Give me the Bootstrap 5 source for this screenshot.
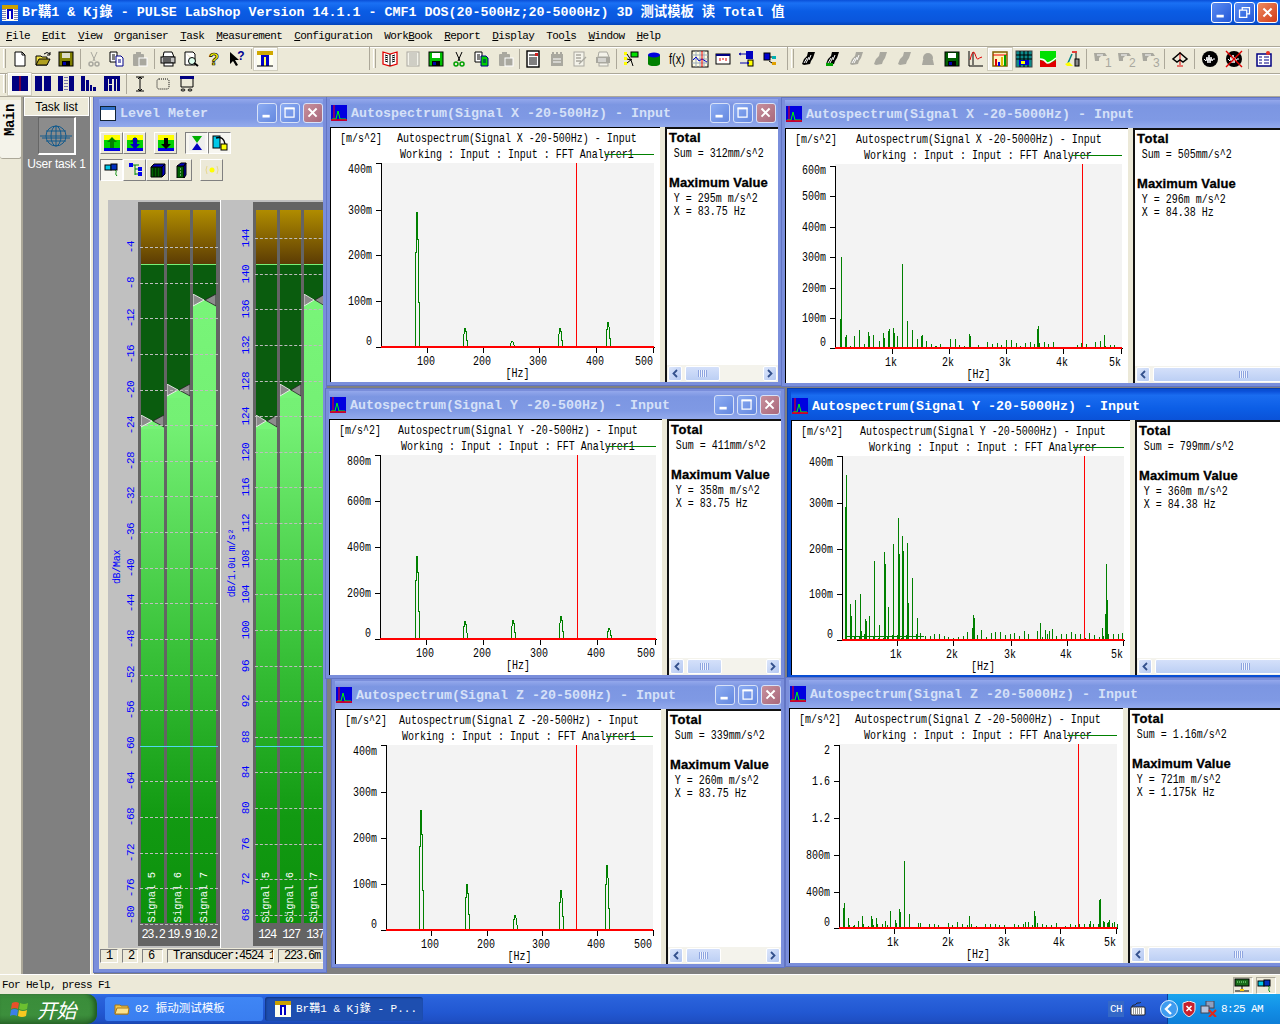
<!DOCTYPE html>
<html lang="en">
<head>
<meta charset="UTF-8">
<title>PULSE LabShop</title>
<link rel="stylesheet" href="https://cdn.jsdelivr.net/npm/bootstrap@5.3.0/dist/css/bootstrap.min.css">
<style>
html,body{margin:0;height:1024px;overflow:hidden;background:#ece9d8}
.app{width:1280px;height:1024px;font-family:"Liberation Mono","Noto Sans CJK SC",monospace;color:#000;overflow:hidden}
.apptitle{height:25px;flex:none;padding:0 2px;color:#fff;font-weight:700;font-size:13.33px;white-space:pre;background:linear-gradient(#0a4fd8,#1a70f4 12%,#0a5ce4 45%,#0a56dc 85%,#0544b8)}
.capbtn{width:21px;height:21px;border:1px solid #fff;border-radius:3px;background:linear-gradient(135deg,#5b8cf2,#2258d8);flex:none}
.capbtn.cls{background:linear-gradient(135deg,#ee8a60,#d23c18)}
.capbtn svg{display:block;width:100%;height:100%}
.capgroup{gap:2px;margin-right:0}
.menubar{height:21px;flex:none;font-size:11px;letter-spacing:-.6px;padding-top:1px}
.menubar span{padding:0 6px;width:auto}
.menubar u{text-underline-offset:1px}
.tbrow{flex:none;border-top:1px solid #aca899;box-shadow:inset 0 1px 0 #fff;padding-bottom:3px}
.tbrow1{height:27px}.tbrow2{height:23px}
.tbgroup{height:100%;padding-left:3px;flex:none}
.tbg1{width:369px}.tbg2{width:418px;border-left:1px solid #aca899}.tbg3{border-left:1px solid #aca899;width:493px}
.grip{width:3px;height:19px;margin:0 2px 0 0;border-left:1px solid #fff;border-right:1px solid #aca899;flex:none}
.tbbtn{width:23.2px;height:22px;flex:none}
.tbg3 .tbbtn{width:24px}
.tbbtn svg{width:16px;height:16px;display:block;overflow:visible}
.tbbtn.on{background:#f7f6f0;box-shadow:inset 1px 1px 0 #fff,0 0 0 1px #d0cdbd}
.tbsep{width:4.6px;height:20px;flex:none;position:relative}
.tbg3 .tbsep{width:6px}
.tbsep::after{content:"";position:absolute;left:2px;top:0;bottom:0;width:1px;background:#aca899}
.mdi{height:879px;flex:none;background:#808080;border-top:1px solid #aca899;border-bottom:1px solid #fff;overflow:hidden}
.leftbeige{width:22px;background:#ece9d8;height:100%}
.maintab{position:absolute;left:0;top:3px;width:22px;height:59px;background:#f4f3ea;border-right:1px solid #aca899;border-bottom:1px solid #aca899;border-radius:0 0 3px 3px;font-size:14px;font-weight:700}
.maintab span{writing-mode:vertical-rl;transform:rotate(180deg);display:block;margin:4px auto 0;letter-spacing:-.4px}
.taskpane{position:absolute;left:21px;top:0;width:70px;height:100%;background:#808080;border-left:2px solid #aca899;border-right:1px solid #fff}
.taskhead{margin:0 1px;height:19px;background:#ece9d8;border:1px solid #fff;font:12px "Liberation Sans",Arial,sans-serif}
.taskicon{width:38px;height:38px;margin:1px auto 0;border-right:2px solid #fff;border-bottom:2px solid #fff;background:#8c8c8c;border-top:1px solid #666;border-left:1px solid #666}
.tasklabel{color:#fff;font:12px "Liberation Sans",Arial,sans-serif;text-align:center;margin-top:2px;letter-spacing:-.2px}
.beigegap{position:absolute;left:91px;top:0;width:3px;height:100%;background:#ece9d8}
.win{position:absolute;border:3px solid #7a8edb;border-top-width:2px;background:#ece9d8;box-shadow:0 0 0 1px #6275c4}
.win.act{border-color:#0a4fd4;box-shadow:0 0 0 1px #0a3fb0}
.win.lvlwin{border-left-width:5px}
.wintitle{flex:none;color:#d5e0f8;font-weight:700;font-size:13.33px;white-space:pre;padding-left:1px;background:linear-gradient(#94a8ec,#7c96e2 20%,#7f99e4 70%,#93aaec)}
.win.act .wintitle{color:#fff;background:linear-gradient(#0a4fd8,#1a6cf0 15%,#0c5ee6 60%,#0a52d8)}
.wintitletext{padding-top:2px}
.wincap{width:20px;height:20px;border:1px solid #d8e2f8;border-radius:3px;background:linear-gradient(135deg,#8cacf2,#6488e0);flex:none}
.wincap.cls{background:linear-gradient(135deg,#c8909c,#a8687c)}
.wincap svg{display:block;width:100%;height:100%}
.capset{gap:3px}
.plotpane{background:#fff;border-top:1px solid #000;border-left:1px solid #000;flex:none;height:100%}
.plotpane svg{display:block}
.sidepane{background:#fff;border-top:2px solid #111;border-left:2px solid #111;flex:none;height:100%;margin-left:5px;overflow:hidden}
.sidehead{font:700 13px/16px "Liberation Sans",Arial,sans-serif;padding-left:2px;letter-spacing:.4px;-webkit-text-stroke:.3px #000}
.sidehead.maxhead{letter-spacing:.1px;margin-top:13px}
.sideline{font-size:12px;line-height:13.5px;padding-left:8px;white-space:pre;transform:scaleX(.833);transform-origin:0 0}
.sideline.gapline{margin-top:2px}
.chartlabel{font:12px "Liberation Mono",monospace;fill:#000}
.sbar{height:17px;background:#f4f3ec;padding:1px 1px 0 1px}
.sbtn{width:14px;height:15px;border:1px solid #fff;border-radius:2px;background:linear-gradient(135deg,#dce6fb,#b4c8f2);flex:none}
.sbtn svg{display:block}
.sthumb{height:15px;border:1px solid #fff;border-radius:2px;background:linear-gradient(#d4e0fa,#bccff4);margin-left:3px;flex:none;color:#7f97d8}
.sgrip{width:9px;height:7px;background:repeating-linear-gradient(90deg,#8ea5e0 0 1px,#eef3fe 1px 2px)}
.lvltools{height:73px;flex:none;padding:5px 0 0 1px}
.lvlrow{height:22px;margin-bottom:5px;position:relative}
.lvlbtn{width:23px;height:22px;background:#ece9d8;border:1px solid;border-color:#fff #808080 #808080 #fff;flex:none}
.lvlbtn svg{width:16px;height:16px;display:block}
.lvlbtn.on{background:#f7f6f0;border-color:#808080 #fff #fff #808080}
.lvlpanel{height:748px;background:#c0c0c0;margin-left:9px;overflow:hidden;flex:none}
.scalecol{position:relative;flex:none;height:100%}
.scalenum{position:absolute;writing-mode:vertical-rl;transform:translateY(-50%) rotate(180deg);color:#00f;font-size:11px;line-height:12px;letter-spacing:-.4px;white-space:pre}
.scalename{font-size:10px;letter-spacing:-.3px}
.meterbox{position:relative;flex:none;height:744px;margin-top:2px;background:#646464;padding:8px 0 0 3px}
.meterbars{height:713px;column-gap:3px}
.mbar{position:relative;height:713px;flex:none;background:linear-gradient(#7cf87c 0,#74f074 30%,#3cc43c 60%,#129a12 85%,#0c900c 100%);overflow:hidden}
.mbrown{height:54px;background:linear-gradient(#b08c00,#5c3c04)}
.mline{height:1px;background:#78f078}
.mdark{background:#0a5c0e}
.msig{position:absolute;left:0;right:0;bottom:0;color:#fff;font-size:10.5px;line-height:1;writing-mode:vertical-rl;transform:rotate(180deg);white-space:pre;display:flex;align-items:center;padding-top:1px}
.mvalrow{height:23px;color:#fff;font-size:12px;letter-spacing:-1.4px;margin-left:-1px}
.mval{flex:none;text-align:center}
.mdash{position:absolute;left:2px;right:2px;height:0;border-top:1px dashed #bdbdbd}
.mcyan{position:absolute;left:2px;right:2px;height:1px;background:#4fd8f0}
.mmark{position:absolute;left:0;width:100%;height:14px}
.lvlstatus{height:16px;padding:1px 0 0 1px;font-size:12px;letter-spacing:-1.2px;flex:none}
.lvlcell{height:14px;border:1px solid;border-color:#808080 #fff #fff #808080;line-height:12px;padding-left:5px;flex:none;white-space:pre;overflow:hidden}
.statusbar{height:19px;flex:none;font-size:11px;letter-spacing:-.6px;padding:1px 0 0 2px}
.statcell{width:20px;height:17px;border:1px solid;border-color:#aca899 #fff #fff #aca899;margin-left:3px}
.statcell svg{width:16px;height:15px;display:block}
.taskbar{height:30px;flex:none;background:linear-gradient(#2f6ee8,#2a63dc 10%,#2258d2 60%,#1e4fc4 90%,#1a46ae);color:#fff;font-size:12px;position:relative}
.startbtn{width:97px;height:30px;border-radius:0 10px 10px 0;background:linear-gradient(#4d9a4d,#3a8d3a 12%,#3c8f3c 70%,#2e6f2e);padding-left:10px;box-shadow:inset -3px 0 4px #1f5a1f;flex:none}
.startlabel{font:italic 20px "Noto Sans CJK SC",sans-serif;color:#fff;margin-left:7px;letter-spacing:-.5px}
.tkbtn{width:158px;height:24px;border-radius:3px;flex:none;padding-left:9px;white-space:pre;letter-spacing:-.6px;font-size:11px;background:linear-gradient(#3f86f5,#3a7ef0)}
.tkbtn.dn{background:#1e4fb0;box-shadow:inset 1px 1px 2px #123580;margin-left:2px;padding-left:10px}
.tkbtn svg{width:16px;height:16px;margin-right:5px;flex:none}
.tkcjk{font-family:"Liberation Mono","Noto Sans CJK SC",monospace;font-size:11.5px;letter-spacing:0}
.tkcjk.tksmall{font-size:11px}
.tray{position:absolute;right:0;top:0;height:30px;width:113px;background:linear-gradient(#1aa4ee,#128fe6 50%,#0e7fd8);border-left:1px solid #0b3d9a}
.trayleft{position:absolute;left:1108px;top:0;height:30px}
.trayarrow{margin-left:-8px}
.trayclock{font-size:11px;letter-spacing:-.6px;margin-left:4px}
.langchip{background:#3468c8;padding:0 2px;font-size:11px;letter-spacing:-.6px;line-height:16px}
.kbicon{margin-left:6px}
</style>
</head>
<body>
<div class="app d-flex flex-column">
  <div class="apptitle d-flex align-items-center">
    <svg width="16" height="16" viewBox="0 0 16 16" class="me-1 flex-none"><rect width="16" height="16" fill="#ffe"/><rect x="0" y="0" width="16" height="4" fill="#caa000"/><rect x="5" y="4" width="6" height="10" fill="#0000c0"/><rect x="7" y="6" width="2" height="8" fill="#fff"/><path d="M1 4v11M3 4v11M13 4v11M15 4v11" stroke="#008" stroke-dasharray="1 1"/></svg>
    <span>Br鞲1 &amp; Kj錄 - PULSE LabShop Version 14.1.1 - CMF1 DOS(20-500Hz;20-5000Hz) 3D 测试模板 读 Total 值</span>
    <div class="ms-auto d-flex capgroup">
      <div class="capbtn"><svg viewBox="0 0 21 21"><rect x="5" y="13" width="8" height="3" fill="#fff"/></svg></div>
      <div class="capbtn"><svg viewBox="0 0 21 21"><path d="M8 8V5h8v7h-3M5 8h8v8H5z" fill="none" stroke="#fff" stroke-width="1.4"/></svg></div>
      <div class="capbtn cls"><svg viewBox="0 0 21 21"><path d="M6 6l9 9M15 6l-9 9" stroke="#fff" stroke-width="2.2"/></svg></div>
    </div>
  </div>
  <div class="menubar d-flex align-items-center">
    <span><u>F</u>ile</span><span><u>E</u>dit</span><span><u>V</u>iew</span><span><u>O</u>rganiser</span><span><u>T</u>ask</span><span><u>M</u>easurement</span><span><u>C</u>onfiguration</span><span>Work<u>B</u>ook</span><span><u>R</u>eport</span><span><u>D</u>isplay</span><span>Too<u>l</u>s</span><span><u>W</u>indow</span><span><u>H</u>elp</span>
  </div>
  <div class="tbrow tbrow1 d-flex align-items-center" id="tb1"></div>
  <div class="tbrow tbrow2 d-flex align-items-center" id="tb2"></div>
  <div class="mdi position-relative" id="mdi">
    <div class="leftbeige"></div>
    <div class="maintab"><span>Main</span></div>
    <div class="taskpane">
      <div class="taskhead d-flex align-items-center justify-content-center">Task list</div>
      <div class="taskicon d-flex align-items-center justify-content-center">
        <svg width="34" height="24" viewBox="0 0 34 24" fill="none" stroke="#125a8c"><circle cx="17" cy="12" r="10"/><ellipse cx="17" cy="12" rx="5" ry="10"/><path d="M7 7h20M7 17h20M1 12h32M3 14h28M17 2v20" /></svg>
      </div>
      <div class="tasklabel">User task 1</div>
    </div>
    <div class="beigegap"></div>
  </div>
  <div class="statusbar d-flex align-items-center">
    <span>For Help, press F1</span>
    <div class="ms-auto d-flex me-1">
      <div class="statcell"><svg viewBox="0 0 16 15"><rect x="1" y="1" width="14" height="7" fill="#1a6a1a" stroke="#000"/><path d="M3 4h10" stroke="#9f9" stroke-dasharray="1 1"/><path d="M8 8v4M1 13h14" stroke="#000"/><rect x="6" y="11" width="4" height="2" fill="#fc0"/></svg></div>
      <div class="statcell"><svg viewBox="0 0 16 15"><rect x="1" y="3" width="6" height="5" fill="#00c8e8" stroke="#000"/><rect x="7" y="2" width="6" height="6" fill="#0030c0" stroke="#000"/><path d="M11 8c3 2-1 3 2 6" fill="none" stroke="#080"/></svg></div>
    </div>
  </div>
  <div class="taskbar d-flex align-items-center">
    <div class="startbtn d-flex align-items-center">
      <svg width="20" height="18" viewBox="0 0 20 18"><path d="M2 3q4-2 7 0l-1 6q-3-2-7 0z" fill="#e8502a"/><path d="M10 3q4 2 8 0l-1 6q-4 2-8 0z" fill="#6cc030"/><path d="M1 10q3-2 7 0l-1 6q-4-2-7 0z" fill="#3c7fe8"/><path d="M9 10q4 2 8 0l-1 6q-4 2-8 0z" fill="#f8c820"/></svg>
      <span class="startlabel">开始</span>
    </div>
    <div class="tkbtn d-flex align-items-center ms-2">
      <svg viewBox="0 0 16 16"><path d="M1 13V4h5l1 1h7v8z" fill="#f4c84c" stroke="#a87818"/><path d="M1 13l2-6h12l-1 6z" fill="#fce28c" stroke="#a87818"/></svg>
      <span class="tkcjk">02 振动测试模板</span>
    </div>
    <div class="tkbtn dn d-flex align-items-center">
      <svg viewBox="0 0 16 16"><rect width="16" height="16" fill="#ffe"/><rect width="16" height="4" fill="#caa000"/><rect x="5" y="4" width="6" height="10" fill="#0000c0"/><rect x="7" y="6" width="2" height="8" fill="#fff"/></svg>
      <span class="tkcjk tksmall">Br鞲1 &amp; Kj錄 - P...</span>
    </div>
    <div class="trayleft d-flex align-items-center">
      <span class="langchip">CH</span>
      <svg class="kbicon" width="16" height="14" viewBox="0 0 16 14"><rect x="1" y="5" width="14" height="8" rx="1" fill="#fff" stroke="#222"/><path d="M3 7h10M3 9h10M3 11h10" stroke="#333" stroke-dasharray="1 1"/><path d="M2 5c0-3 3-1 4-3s3 0 5-2" fill="none" stroke="#222"/></svg>
    </div>
    <div class="tray d-flex align-items-center">
      <svg class="trayarrow" width="18" height="18" viewBox="0 0 18 18"><circle cx="9" cy="9" r="8.5" fill="#3f9cf0" stroke="#dcefff"/><path d="M11 4l-5 5 5 5" fill="none" stroke="#fff" stroke-width="2.4"/></svg>
      <svg class="ms-1" width="14" height="16" viewBox="0 0 14 16"><path d="M7 0l6 2v6c0 4-3 6-6 8-3-2-6-4-6-8V2z" fill="#c8202c" stroke="#eee"/><path d="M4.500 5l5 5M9.500 5l-5 5" stroke="#fff" stroke-width="1.6"/></svg>
      <svg class="ms-1" width="17" height="16" viewBox="0 0 17 16"><rect x="6" y="0" width="8" height="7" fill="#8fa0c0" stroke="#445"/><rect x="1" y="5" width="8" height="7" fill="#b8c4dc" stroke="#445"/><path d="M9 9l7 7M16 9l-7 7" stroke="#e02818" stroke-width="2"/></svg>
      <span class="trayclock">8:25 AM</span>
    </div>
  </div>
</div>
<script>
// toolbar icons, 16x16
const G = '#a9a89f';
const hand = (c, f) => `<path d="M8 1h7l-2 6-2 3-1 3-6 1-2-1 2-5 3-3z" fill="${c}"/><path d="M7 7l-3 5M9 6l-3 6M11 4l-2 5" stroke="#fff"/>` + (f ? `<rect x="2" y="12" width="7" height="3" fill="${f}"/>` : '');
const ghost = `<path d="M8 1h7l-2 6-2 3-1 3-6 1-2-1 2-5 3-3z" fill="${G}"/>`;
const floppy = (c, d) => `<rect x="1" y="1" width="14" height="14" fill="${c}" stroke="#000"/><rect x="4" y="2" width="8" height="5" fill="${d}"/><rect x="4" y="10" width="8" height="5" fill="#000"/><rect x="5" y="11" width="3" height="3" fill="#00a"/>`;
const scis = c => `<path d="M5 1l4 9M11 1L7 10" stroke="#000" fill="none"/><circle cx="5" cy="13" r="2" fill="none" stroke="${c}" stroke-width="1.500"/><circle cx="11" cy="13" r="2" fill="none" stroke="${c}" stroke-width="1.500"/>`;
const copy2 = c => `<path d="M1 1h7v10H1z" fill="#fff" stroke="#000"/><path d="M3 4h3M3 6h3M3 8h3" stroke="#000"/><path d="M7 5h5l2 2v8H7z" fill="${c}" stroke="#008"/><path d="M9 9h3M9 11h3" stroke="#008"/>`;
const paste = `<rect x="1" y="3" width="11" height="12" rx="1" fill="${G}"/><rect x="4" y="1" width="5" height="3" fill="${G}"/><rect x="7" y="7" width="8" height="8" fill="${G}" stroke="#fff"/>`;
const gun = n => `<path d="M0 2h11l2 3H7L5 7v3H1z" fill="${G}"/><path d="M3 4h6" stroke="#fff"/><text x="11" y="16" font-size="12" font-family="Liberation Sans" fill="${G}">${n}</text>`;
const ic = {
  newf:`<path d="M3 1h7l3 3v11H3z" fill="#fff" stroke="#000"/><path d="M10 1v3h3" fill="none" stroke="#000"/>`,
  open:`<path d="M1 14V5h5l1 1h5v8z" fill="#f0e040" stroke="#000"/><path d="M1 14l3-6h11l-3 6z" fill="#b0a020" stroke="#000"/><path d="M9 3q3-3 6 0m0-2v3h-3" fill="none" stroke="#000"/>`,
  save:floppy('#808000','#dcdcc8'),
  cut:`<path d="M5 1l4 9M11 1L7 10" stroke="${G}"/><circle cx="5" cy="13" r="2" fill="none" stroke="${G}" stroke-width="1.500"/><circle cx="11" cy="13" r="2" fill="none" stroke="${G}" stroke-width="1.500"/>`,
  copy:copy2('#fff'), paste,
  print:`<path d="M4 1h8l2 5H3z" fill="#fff" stroke="#000"/><rect x="1" y="6" width="14" height="6" fill="#c0c0c0" stroke="#000"/><path d="M3 8h8M3 10h8" stroke="#000"/><rect x="4" y="12" width="9" height="3" fill="#fff" stroke="#000"/>`,
  prev:`<path d="M2 1h8l2 2v6M12 14H2V1" fill="#fff" stroke="#000"/><circle cx="9" cy="10" r="3.500" fill="#dfe" stroke="#000"/><path d="M11 12l4 3" stroke="#000" stroke-width="2"/>`,
  help:`<text x="8" y="14" text-anchor="middle" font-size="17" font-weight="700" font-family="Liberation Sans" fill="#ff0" stroke="#000" stroke-width=".7">?</text>`,
  what:`<path d="M1 1v12l3-3 3 5 2-1-3-5h4z" fill="#000"/><text x="12" y="9" text-anchor="middle" font-size="12" font-weight="700" font-family="Liberation Sans" fill="#000090">?</text>`,
  pulse:`<rect x="0" y="1" width="16" height="14" fill="#fffff0"/><rect y="0" width="16" height="4" fill="#d0a800"/><rect x="4" y="4" width="8" height="11" fill="#0000c8"/><rect x="7" y="6" width="2" height="9" fill="#ffff60"/><path d="M0 15h16" stroke="#000"/>`,
  book:`<path d="M1 1l7 2 7-2v12l-7 2-7-2z" fill="#fff" stroke="#e00000" stroke-width="1.300"/><path d="M8 3v12M3 4l3 1M3 6l3 1M3 8l3 1M3 10l3 1M10 5l3-1M10 7l3-1M10 9l3-1M10 11l3-1" stroke="#000"/>`,
  lines:`<rect x="2" y="1" width="12" height="14" fill="#f4f3ea" stroke="${G}"/><path d="M4 3h8M4 5h8M4 7h8M4 9h8M4 11h8M4 13h8" stroke="${G}"/>`,
  saveg:floppy('#00c000','#fff'),
  cutg:scis('#00a000'), copyg:copy2('#00d000'),
  rep:`<rect x="2" y="0" width="12" height="16" fill="#fff" stroke="#000" stroke-width="1.400"/><path d="M4 4h6M4 7h8M4 9h8M4 11h8M4 13h8" stroke="#000"/><rect x="10" y="2" width="3" height="3" fill="#d02020"/>`,
  grep:`<rect x="2" y="3" width="12" height="12" fill="${G}"/><path d="M4 1v5M8 1v5M12 1v5" stroke="${G}" stroke-width="2"/><path d="M4 8h8M4 11h8" stroke="#fff"/>`,
  gedit:`<rect x="2" y="1" width="10" height="14" fill="#f4f3ea" stroke="${G}"/><path d="M4 4h5M4 7h5M4 10h5M7 13l7-7" stroke="${G}" stroke-width="1.300"/>`,
  gprint:`<path d="M4 1h8l2 5H3z" fill="#f4f3ea" stroke="${G}"/><rect x="1" y="6" width="14" height="6" fill="${G}"/><path d="M3 8h8M3 10h8" stroke="#fff"/><rect x="4" y="12" width="9" height="3" fill="#f4f3ea" stroke="${G}"/>`,
  tree:`<rect x="1" y="1" width="3" height="3" fill="#ff0"/><rect x="1" y="6" width="3" height="3" fill="#ff0"/><rect x="1" y="11" width="3" height="3" fill="#ff0"/><rect x="8" y="1" width="7" height="5" fill="#00e000" stroke="#000"/><path d="M4 3l4 6 2 6M4 8l4 1M4 12l5-4" stroke="#000" fill="none"/>`,
  can:`<rect x="2" y="4" width="12" height="9" fill="#008000"/><ellipse cx="8" cy="13" rx="6" ry="2" fill="#008000"/><ellipse cx="8" cy="4" rx="6" ry="2.500" fill="#0000e0"/>`,
  fx:`<text x="0" y="13" font-size="14" font-family="Liberation Sans" fill="#000" textLength="16" lengthAdjust="spacingAndGlyphs">f(x)</text>`,
  scope:`<rect x="0" y="0" width="16" height="16" fill="#fffbe0" stroke="#000"/><path d="M4 0v16M8 0v16M12 0v16M0 4h16M0 8h16M0 12h16" stroke="#9ab"/><path d="M1 9l3-3 3 4 3-2 5 3" fill="none" stroke="#00c" /><path d="M10 0v16" stroke="#e00"/>`,
  proc:`<rect x="1" y="3" width="14" height="10" fill="#fff" stroke="#000"/><rect x="1" y="3" width="14" height="2" fill="#000080"/><path d="M5 7v3M11 7v3M7 8h2" stroke="#e00000"/>`,
  flow:`<rect x="7" y="0" width="7" height="8" fill="#0000c0"/><rect x="9" y="9" width="5" height="6" fill="#ff0" stroke="#000"/><path d="M1 3h6M2 2L0 3l2 1M1 12h8M8 11l2 1-2 1" stroke="#00a" fill="none"/>`,
  block:`<rect x="2" y="2" width="6" height="7" fill="#0000d0" stroke="#000"/><rect x="10" y="5" width="4" height="3" fill="#00b0b0"/><rect x="10" y="11" width="4" height="3" fill="#e0a000"/><path d="M8 6h2M7 10l3 2" stroke="#000"/>`,
  h1:hand('#000'), h2:hand('#000','#00a000'), gh1:hand(G), gh2:ghost, gh3:ghost, gh4:`<circle cx="8" cy="7" r="5" fill="${G}"/><path d="M3 9h10l1 5H2z" fill="${G}"/>`,
  saved:floppy('#006000','#fff'),
  graph:`<path d="M1 0v15h14M1 15" stroke="#000" fill="none"/><path d="M5 1v13" stroke="#000"/><path d="M2 9q3-12 5-6t3 5 4-2" fill="none" stroke="#e00000"/>`,
  chart:`<rect x="1" y="1" width="14" height="14" fill="#fff4c0" stroke="#806000" stroke-width="1.500"/><rect x="3" y="8" width="2" height="7" fill="#e00000"/><rect x="6" y="11" width="2" height="4" fill="#0000e0"/><rect x="9" y="6" width="2" height="9" fill="#e0c000"/><path d="M1 4h14" stroke="#e00"/><rect x="12" y="4" width="2" height="11" fill="#00a000"/>`,
  grid:`<rect x="0" y="0" width="16" height="16" fill="#0a8a8a" stroke="#444"/><path d="M4 0v16M8 0v16M12 0v16M0 4h16M0 8h16" stroke="#000"/><rect x="3" y="9" width="10" height="5" fill="#0000d0"/><rect x="5" y="10" width="4" height="3" fill="#ff0"/>`,
  curve:`<rect x="0" y="0" width="16" height="16" fill="#00e000"/><path d="M0 9l5 1 3 3 8-4v7H0z" fill="#e00000"/><path d="M0 8q4 0 6 3t10-4" fill="none" stroke="#fff" stroke-width="1.500"/>`,
  pen:`<path d="M12 2v6" stroke="#000"/><path d="M8 1h5" stroke="#e00000" stroke-width="1.500"/><rect x="11" y="8" width="4" height="7" fill="#888" stroke="#000"/><path d="M8 3l-4 9" stroke="#008080" stroke-width="1.500"/><path d="M1 13l4-2 4 4H3z" fill="#ff0"/>`,
  g1:gun(1), g2:gun(2), g3:gun(3),
  scale:`<path d="M8 1v13M5 15h6" stroke="#e00000"/><path d="M8 2L1 8l4 3 3-2 3 2 4-3z" fill="none" stroke="#000" stroke-width="1.500"/>`,
  wave:`<circle cx="8" cy="8" r="8" fill="#000"/><path d="M2 8l2 2 1-4 1 6 1-8 1 8 1-6 1 4 1-2h2" fill="none" stroke="#fff"/>`,
  waveoff:`<circle cx="8" cy="8" r="8" fill="#000"/><path d="M2 8l2 2 1-4 1 6 1-8 1 8 1-6 1 4 1-2h2" fill="none" stroke="#fff"/><path d="M0 0l16 16M16 0L0 16" stroke="#e00000" stroke-width="1.400"/>`,
  note:`<rect x="1" y="3" width="14" height="12" fill="#fff" stroke="#000080" stroke-width="1.500"/><path d="M3 6h3M8 6h5M3 9h3M8 9h5M3 12h3M8 12h5" stroke="#000080"/><circle cx="12" cy="2" r="2" fill="#e83020"/>`,
  one:`<rect x="0" y="0" width="16" height="15" fill="#000080"/><path d="M8 0v15" stroke="#e00000"/>`,
  two:`<rect x="0" y="0" width="7" height="15" fill="#000080"/><rect x="9" y="0" width="7" height="15" fill="#000080"/>`,
  three:`<rect x="0" y="0" width="5" height="15" fill="#000080"/><rect x="11" y="0" width="5" height="15" fill="#000080"/><path d="M7 1v13M9 1v13" stroke="#000080" stroke-dasharray="1 2"/>`,
  four:`<path d="M0 0h4v15H0zM5 4h3v11H5zM9 9h2v6H9zM12 11h3v4h-3z" fill="#000080"/>`,
  five:`<path d="M0 0h4v15H0zM5 0h3v8H5zM5 9h3v6H5zM10 0h2v15h-2zM13 0h3v15h-3zM0 0h16v3H0z" fill="#000080"/>`,
  cursor:`<path d="M4 1h8M8 1v14M4 15h8M6 3l2-2 2 2M6 13l2 2 2-2" stroke="#000" fill="none"/>`,
  dots:`<rect x="2" y="3" width="12" height="10" rx="2" fill="none" stroke="#000" stroke-dasharray="1 1"/>`,
  bars:`<rect x="1" y="0" width="14" height="3" fill="#000080"/><path d="M2 3v8h12V3" fill="none" stroke="#000"/><ellipse cx="4" cy="14" rx="2" ry="1" fill="none" stroke="#000"/><ellipse cx="11" cy="14" rx="2" ry="1" fill="none" stroke="#000"/>`
};
const btn = (n, on) => `<div class="tbbtn ${on ? 'on' : ''} d-flex align-items-center justify-content-center"><svg viewBox="0 0 16 16">${ic[n]}</svg></div>`;
const sep = '<div class="tbsep"></div>';
const grip = '<div class="grip"></div>';
const group = (cls, items) => `<div class="tbgroup ${cls} d-flex align-items-center">${grip}${items}</div>`;
const row = a => a.map(n => n === '|' ? sep : n[0] === '*' ? btn(n.slice(1), true) : btn(n)).join('');
document.getElementById('tb1').innerHTML =
  group('tbg1', row(['newf','open','save','|','cut','copy','paste','|','print','prev','help','what','|','*pulse'])) +
  group('tbg2', row(['book','lines','saveg','cutg','copyg','paste','|','rep','grep','gedit','gprint','|','tree','can','fx','scope','proc','flow','block'])) +
  group('tbg3', row(['h1','h2','gh1','gh2','gh3','gh4','saved','graph','*chart','grid','curve','pen','|','g1','g2','g3','|','scale','|','wave','waveoff','|','note']));
document.getElementById('tb2').innerHTML =
  group('', row(['*one','two','three','four','five','|','cursor','dots','bars']));

// seeded noise so the small spectrum bars stay the same between runs
let seed = 17;
const rnd = () => (seed = (seed * 16807) % 2147483647) / 2147483647;

function peakPath(rel, h, ax, bot) {
  const x = ax + rel + .5;
  const pts = [[-3,0],[-2,1],[-1.5,h*.7],[-1,h*.7],[-.5,h],[0,h],[.5,h*.8],[1,h*.8],[1.5,h*.33],[2,h*.33],[2,1],[3,0]];
  return 'M' + pts.map(p => (x + p[0]).toFixed(1) + ' ' + (bot - p[1]).toFixed(1)).join('L');
}
function barsPath(bars, ax, bot) {
  return bars.map(b => `M${Math.round(ax + b[0]) + .5} ${bot}v${-b[1]}`).join('');
}
function noise(width, from, amp) {
  const out = [];
  for (let r = from; r < width; r += 4.7) {
    if (rnd() < .85) out.push([r, 2 + rnd() * amp * (rnd() < .15 ? 2 : 1)]);
  }
  return out;
}

const wins = [
  {cl:330, ct:127, pr:660, sl:665, sr:778, cb:382, tt:99, title:'Autospectrum(Signal X -20-500Hz) - Input', capR:2,
   sum:'312mm/s^2', my:'295m m/s^2', mx:'83.75 Hz',
   ax:381, right:654, top:163, bot:347, cur:576, mxl:340, txl:397, wxl:400, lg:605, h1:138, h2:154, wt:'FFT Analyrer1',
   yt:[['400m',163],['300m',210],['200m',255],['100m',301],['0',347]], xt:[['100',427],['200',483],['300',539],['400',596],['500',653]],
   peaks:[[36,135],[84,19],[131,6],[179,19],[227,25]]},
  {cl:785, ct:128, pr:1128, sl:1133, sr:1300, cb:383, tt:100, title:'Autospectrum(Signal X -20-5000Hz) - Input', noCaps:true,
   sum:'505mm/s^2', my:'296m m/s^2', mx:'84.38 Hz',
   ax:835, right:1122, top:164, bot:348, cur:1082, mxl:795, txl:856, wxl:864, lg:1072, h1:139, h2:155, wt:'FFT Analyrer',
   yt:[['600m',166],['500m',196],['400m',227],['300m',257],['200m',288],['100m',318],['0',348]], xt:[['1k',892],['2k',949],['3k',1006],['4k',1063],['5k',1121]],
   bars:[[5,29],[6,91],[10,11],[11,13],[15,2],[19,12],[24,18],[29,4],[33,16],[34,12],[38,13],[44,7],[48,15],[49,10],[53,17],[54,19],[58,20],[59,15],[62,12],[67,84],[72,27],[77,18],[82,9],[86,12],[87,13],[91,7],[96,4],[134,14],[135,12],[202,19],[203,22],[269,13],[265,7],[260,6],[100,2]], noiseFrom:96, amp:4},
  {cl:329, ct:419, pr:662, sl:667, sr:781, cb:675, tt:391, title:'Autospectrum(Signal Y -20-500Hz) - Input', capR:1,
   sum:'411mm/s^2', my:'358m m/s^2', mx:'83.75 Hz',
   ax:380, right:656, top:455, bot:639, cur:577, mxl:339, txl:398, wxl:401, lg:607, h1:430, h2:446, wt:'FFT Analyrer1',
   yt:[['800m',455],['600m',501],['400m',547],['200m',593],['0',639]], xt:[['100',426],['200',483],['300',540],['400',597],['500',655]],
   peaks:[[37,83],[85,18],[133,19],[181,23],[229,11]]},
  {cl:791, ct:420, pr:1130, sl:1135, sr:1300, cb:675, tt:391, title:'Autospectrum(Signal Y -20-5000Hz) - Input', act:true, noCaps:true,
   sum:'799mm/s^2', my:'360m m/s^2', mx:'84.38 Hz', hump:82,
   ax:842, right:1124, top:456, bot:640, cur:1084, mxl:801, txl:860, wxl:869, lg:1073, h1:431, h2:447, wt:'FFT Analyrer',
   yt:[['400m',456],['300m',503],['200m',549],['100m',594],['0',640]], xt:[['1k',897],['2k',953],['3k',1011],['4k',1067],['5k',1123]],
   bars:[[3,133],[4,165],[8,36],[9,24],[13,40],[18,46],[19,9],[23,21],[24,19],[27,24],[32,79],[37,15],[42,88],[43,76],[46,33],[51,96],[56,122],[57,86],[60,104],[61,89],[65,97],[66,37],[70,62],[75,22],[131,25],[132,22],[195,9],[198,17],[203,10],[207,9],[260,12],[263,26],[264,76],[265,40]], noiseFrom:3, amp:6},
  {cl:335, ct:709, pr:661, sl:666, sr:781, cb:964, tt:681, title:'Autospectrum(Signal Z -20-500Hz) - Input', capR:0,
   sum:'339mm/s^2', my:'260m m/s^2', mx:'83.75 Hz',
   ax:386, right:653, top:745, bot:930, cur:576, mxl:345, txl:399, wxl:402, lg:606, h1:720, h2:736, wt:'FFT Analyrer1',
   yt:[['400m',745],['300m',792],['200m',838],['100m',884],['0',930]], xt:[['100',431],['200',487],['300',542],['400',597],['500',653]],
   peaks:[[35,120],[81,46],[129,15],[175,40],[221,65]]},
  {cl:789, ct:708, pr:1123, sl:1128, sr:1300, cb:963, tt:680, title:'Autospectrum(Signal Z -20-5000Hz) - Input', noCaps:true,
   sum:'1.16m/s^2', my:'721m m/s^2', mx:'1.175k Hz',
   ax:839, right:1117, top:744, bot:928, cur:1078, mxl:799, txl:855, wxl:864, lg:1067, h1:719, h2:735, wt:'FFT Analyrer',
   yt:[['2',745],['1.6',781],['1.2',818],['800m',855],['400m',892],['0',928]], xt:[['1k',894],['2k',949],['3k',1005],['4k',1060],['5k',1116]],
   bars:[[4,20],[5,25],[9,10],[14,2],[19,7],[23,12],[32,12],[33,9],[37,10],[46,7],[51,17],[56,8],[60,19],[61,16],[65,67],[70,14],[79,5],[130,12],[186,6],[195,17],[196,12],[251,7],[260,28],[261,29],[265,6],[269,6],[270,8],[275,6]], noiseFrom:10, amp:3}
];

const label = (x, y, s, anchor) => {
  const w = s.length * 6;
  const xs = anchor === 'end' ? x - w : anchor === 'mid' ? x - w / 2 : x;
  return `<text class="chartlabel" transform="translate(${xs} ${y + 4}) scale(.8333 1)" xml:space="preserve">${s}</text>`;
};

function chartSvg(w) {
  const W = w.pr - w.cl - 1, H = w.cb - w.ct - 1;
  let s = `<svg width="${W}" height="${H}" viewBox="${w.cl + 1} ${w.ct + 1} ${W} ${H}">`;
  s += `<rect x="${w.ax}" y="${w.top}" width="${w.right - w.ax}" height="${w.bot - w.top}" fill="#f3f3f3"/>`;
  s += label(w.mxl, w.h1, '[m/s^2]');
  s += label(w.txl, w.h1, w.title);
  s += label(w.wxl, w.h2, 'Working : Input : Input : ' + w.wt);
  s += `<path d="M${w.lg} ${w.h2 + .5}H${w.right}" stroke="#008000" shape-rendering="crispEdges"/>`;
  // spectrum
  if (w.peaks) {
    s += `<path d="${w.peaks.map(p => peakPath(p[0], p[1], w.ax, w.bot)).join('')}" fill="none" stroke="#008000" shape-rendering="crispEdges"/>`;
  } else {
    const all = w.bars.concat(noise(w.right - w.ax, w.noiseFrom, w.amp));
    s += `<path d="${barsPath(all, w.ax, w.bot)}" stroke="#008000" shape-rendering="crispEdges"/>`;
    if (w.hump) s += `<path d="M${w.ax + 3} ${w.bot - 3.5}H${w.ax + w.hump}" stroke="#008000" stroke-width="1" shape-rendering="crispEdges"/>`;
  }
  // axes
  s += `<path d="M${w.ax + .5} ${w.yt[0][1]}V${w.bot}M${w.ax - 1} ${w.bot + .5}H${w.right + 1}" stroke="#000" shape-rendering="crispEdges"/>`;
  w.yt.forEach(t => {
    const y = Math.round(t[1]) + .5;
    s += `<path d="M${w.ax - 5} ${y}H${w.ax}" stroke="#000" shape-rendering="crispEdges"/>`;
    s += label(w.ax - 9, Math.min(Math.max(t[1], w.top + 6), w.bot - 6), t[0], 'end');
  });
  w.xt.forEach(t => {
    s += `<path d="M${t[1] + .5} ${w.bot}v6" stroke="#000" shape-rendering="crispEdges"/>`;
    const half = t[0].length * 3;
    s += label(Math.min(t[1] - 1, w.right - 1 - half), w.bot + 14, t[0], 'mid');
  });
  s += label((w.ax + w.right) / 2, w.bot + 26, '[Hz]', 'mid');
  s += `<rect x="${w.ax}" y="${w.bot - 1}" width="${w.right - w.ax}" height="2" fill="#f00"/>`;
  s += `<path d="M${w.cur + .5} ${w.top}V${w.bot}" stroke="#f00" shape-rendering="crispEdges"/>`;
  return s + '</svg>';
}

const chartIcon = '<svg width="16" height="16" viewBox="0 0 16 16" class="flex-none me-1"><rect width="16" height="16" fill="#0000e0"/><path d="M3 15V0" stroke="#f00"/><path d="M1 14h4l2-8 1 4 1 4h6" stroke="#0f0" fill="none"/><path d="M0 15h16" stroke="#f00" stroke-width="1.500"/></svg>';
const capBtns = `<div class="ms-auto d-flex capset flex-none">
  <div class="wincap"><svg viewBox="0 0 20 20"><rect x="5" y="12" width="8" height="3" fill="#fff"/></svg></div>
  <div class="wincap"><svg viewBox="0 0 20 20"><path d="M4.500 4.500h10v10h-10z" fill="none" stroke="#fff" stroke-width="1.400"/><path d="M4 5h11" stroke="#fff" stroke-width="2"/></svg></div>
  <div class="wincap cls"><svg viewBox="0 0 20 20"><path d="M5 5l9 9M14 5l-9 9" stroke="#fff" stroke-width="2.200"/></svg></div>
</div>`;

function scrollbar(w) {
  const wide = w.sr > 1280;
  const thumb = wide
    ? '<div class="sthumb d-flex align-items-center" style="width:300px;padding-left:85px"><div class="sgrip"></div></div>'
    : '<div class="sthumb d-flex align-items-center justify-content-center" style="width:35px"><div class="sgrip"></div></div>';
  const right = wide ? '' : '<div class="sbtn ms-auto"><svg width="12" height="13" viewBox="0 0 12 13"><path d="M4 3l3.500 3.500L4 10" fill="none" stroke="#33508c" stroke-width="1.800"/></svg></div>';
  return `<div class="sbar d-flex mt-auto"><div class="sbtn"><svg width="12" height="13" viewBox="0 0 12 13"><path d="M8 3L4.500 6.500 8 10" fill="none" stroke="#33508c" stroke-width="1.800"/></svg></div>${thumb}${right}</div>`;
}

const mdi = document.getElementById('mdi');
const MDI_TOP = 97;

wins.forEach(w => {
  const el = document.createElement('div');
  el.className = 'win d-flex flex-column' + (w.act ? ' act' : '');
  el.style.cssText = `left:${w.cl - 3}px;top:${w.tt - 2 - MDI_TOP}px;width:${w.sr - w.cl + 6}px;height:${w.cb - w.tt + 5}px`;
  el.innerHTML = `
    <div class="wintitle d-flex align-items-center" style="height:${w.ct - w.tt}px;padding-right:${w.capR || 0}px">
      ${chartIcon}<span class="wintitletext">${w.title}</span>${w.noCaps ? '' : capBtns}
    </div>
    <div class="d-flex flex-grow-1" style="min-height:0">
      <div class="plotpane" style="width:${w.pr - w.cl}px">${chartSvg(w)}</div>
      <div class="sidepane d-flex flex-column" style="width:${w.sr - w.sl}px">
        <div class="sidehead" style="margin-top:1px">Total</div>
        <div class="sideline gapline">Sum = ${w.sum}</div>
        <div class="sidehead maxhead">Maximum Value</div>
        <div class="sideline gapline">Y = ${w.my}</div>
        <div class="sideline">X = ${w.mx}</div>
        ${scrollbar(w)}
      </div>
    </div>`;
  mdi.appendChild(el);
});

// level meter window
const lvlIcon = arrow => `<svg viewBox="0 0 16 16"><rect width="16" height="5" fill="#ff0"/><rect y="5" width="16" height="8" fill="#00d000"/><rect y="13" width="16" height="3" fill="#0000e0"/>${arrow}</svg>`;
const up = c => `<path d="M8 2l5 5h-3v6H6V7H3z" fill="${c}"/>`;
const down = c => `<path d="M8 14l5-5h-3V3H6v6H3z" fill="${c}"/>`;
const lvlBtns1 = [
  [lvlIcon(up('#008000')), ''], [lvlIcon(up('#008000') + down('#0000c0')), ''], [lvlIcon(down('#000')), 'ms8'],
  [`<svg viewBox="0 0 16 16"><rect width="16" height="16" fill="#eee"/><path d="M8 8L3 1h10z" fill="#00b000"/><path d="M8 8l-5 7h10z" fill="#0000c0"/></svg>`, 'on ms8'],
  [`<svg viewBox="0 0 16 16"><rect x="1" y="1" width="7" height="12" fill="#00c8e8" stroke="#000"/><rect x="9" y="9" width="6" height="6" fill="#ff0" stroke="#000"/><path d="M4 3q8-2 9 6" fill="none" stroke="#000" stroke-width="1.500"/></svg>`, 'on']
];
const lvlBtns2 = [
  [`<svg viewBox="0 0 16 16"><rect x="1" y="3" width="6" height="5" fill="#00c8e8" stroke="#000"/><rect x="7" y="2" width="6" height="6" fill="#0030c0" stroke="#000"/><path d="M11 8c3 2-1 3 2 6" fill="none" stroke="#080"/></svg>`, 'on'],
  [`<svg viewBox="0 0 16 16"><path d="M4 3h8M8 3v10M8 7h4M8 12h4" stroke="#080"/><rect x="2" y="1" width="4" height="4" fill="#00e"/><rect x="11" y="5" width="4" height="4" fill="#00e"/><rect x="11" y="10" width="4" height="4" fill="#00e"/></svg>`, ''],
  [`<svg viewBox="0 0 16 16"><path d="M1 5h11v10H1z" fill="#006000" stroke="#000"/><path d="M1 5l3-3h11l-3 3zM12 5l3-3v10l-3 3z" fill="#0000c0" stroke="#000"/><path d="M4 6v9M7 6v9M10 6v9" stroke="#000"/></svg>`, ''],
  [`<svg viewBox="0 0 16 16"><path d="M4 4h7v12H4z" fill="#006000" stroke="#000"/><path d="M4 4l4-3h5l-2 3zM11 4l2-3v12l-2 3z" fill="#0000c0" stroke="#000"/><path d="M7 7h1M7 10h1M7 13h1" stroke="#ddd"/></svg>`, ''],
  [`<svg viewBox="0 0 16 16"><circle cx="8" cy="8" r="2.500" fill="#ff0"/><path d="M3 4q-2 4 0 8M13 4q2 4 0 8" fill="none" stroke="#e8d890"/></svg>`, 'ms8']
];
const lvlRow = a => a.map(b => `<div class="lvlbtn ${b[1].includes('on') ? 'on' : ''} d-flex align-items-center justify-content-center" ${b[1].includes('ms8') ? 'style="margin-left:8px"' : ''}>${b[0]}</div>`).join('');

const PANEL_TOP = 200, BAR_TOP = 210;
function scaleCol(width, firstTick, labels, numLeft, name, nameLeft, nameY) {
  let h = '';
  labels.forEach((l, i) => {
    const y = Math.min(firstTick + i * 35.63, 915);
    h += `<div class="scalenum" style="left:${numLeft}px;top:${y - PANEL_TOP}px">${l}</div>`;
  });
  h += `<div class="scalenum scalename" style="left:${nameLeft}px;top:${nameY - PANEL_TOP}px">${name}</div>`;
  return `<div class="scalecol" style="width:${width}px">${h}</div>`;
}
function meter(width, barW, signals, values, firstTick) {
  const levels = [421, 390, 300];
  let bars = '', vals = '', dash = '';
  signals.forEach((sig, i) => {
    const dark = levels[i] + 6 - BAR_TOP - 55;
    const my = levels[i] - 6 - BAR_TOP;
    bars += `<div class="mbar" style="width:${barW}px">
      <div class="mbrown"></div><div class="mline"></div><div class="mdark" style="height:${dark}px"></div>
      <svg class="mmark" style="top:${my}px" viewBox="0 0 23 14" preserveAspectRatio="none"><ellipse cx="11.500" cy="13" rx="11.500" ry="7" fill="#78f478"/><path d="M0 0l11 6L0 12z" fill="#8c8c8c" stroke="#fff" stroke-width=".8"/><path d="M23 0L12 6l11 6z" fill="#8c8c8c" stroke="#222" stroke-width=".8"/></svg>
      <div class="msig"><span>${sig}</span></div>
    </div>`;
    vals += `<div class="mval" style="width:${barW + 3}px">${values[i]}</div>`;
  });
  for (let i = 0; i < 20; i++) dash += `<div class="mdash" style="top:${firstTick + i * 35.63 - 202}px"></div>`;
  return `<div class="meterbox" style="width:${width}px">
    <div class="meterbars d-flex">${bars}</div>
    <div class="mvalrow d-flex align-items-center">${vals}</div>
    ${dash}<div class="mcyan" style="top:544px"></div>
  </div>`;
}
const dbLabels = [], absLabels = [];
for (let i = 1; i <= 20; i++) dbLabels.push('-' + i * 4);
for (let i = 0; i < 20; i++) absLabels.push(144 - i * 4);

const lvl = document.createElement('div');
lvl.className = 'win lvlwin d-flex flex-column';
lvl.style.cssText = `left:94px;top:${97 - MDI_TOP}px;width:232px;height:875px`;
lvl.innerHTML = `
  <div class="wintitle d-flex align-items-center" style="height:28px;padding-right:0">
    <svg width="16" height="15" viewBox="0 0 16 15" class="flex-none" style="margin-right:4px"><rect x=".5" y=".5" width="15" height="14" fill="#fff" stroke="#123"/><rect x="1" y="1" width="14" height="3" fill="#3070c8"/></svg>
    <span class="wintitletext">Level Meter</span>${capBtns}
  </div>
  <div class="flex-grow-1" style="min-height:0;overflow:hidden">
    <div class="lvltools">
      <div class="lvlrow d-flex">${lvlRow(lvlBtns1)}</div>
      <div class="lvlrow d-flex">${lvlRow(lvlBtns2)}</div>
    </div>
    <div class="lvlpanel d-flex">
      ${scaleCol(30, 247, dbLabels, 17, 'dB/Max', 4, 567)}
      <div class="d-flex" style="border-right:1px solid #fff">${meter(82, 23, ['Signal 5','Signal 6','Signal 7'], ['23.2','19.9','10.2'], 247)}</div>
      ${scaleCol(32, 238, absLabels, 19, 'dB/1.0u m/s²', 6, 563)}
      ${meter(100, 21, ['Signal 5','Signal 6','Signal 7'], ['124','127','137'], 238)}
    </div>
    <div class="lvlstatus d-flex gap-1">
      <div class="lvlcell" style="width:18px">1</div>
      <div class="lvlcell" style="width:16px">2</div>
      <div class="lvlcell" style="width:21px">6</div>
      <div class="lvlcell" style="width:107px">Transducer:4524 1</div>
      <div class="lvlcell" style="width:55px">223.6m</div>
    </div>
  </div>`;
mdi.insertBefore(lvl, mdi.querySelector('.win'));
</script>
</body>
</html>
